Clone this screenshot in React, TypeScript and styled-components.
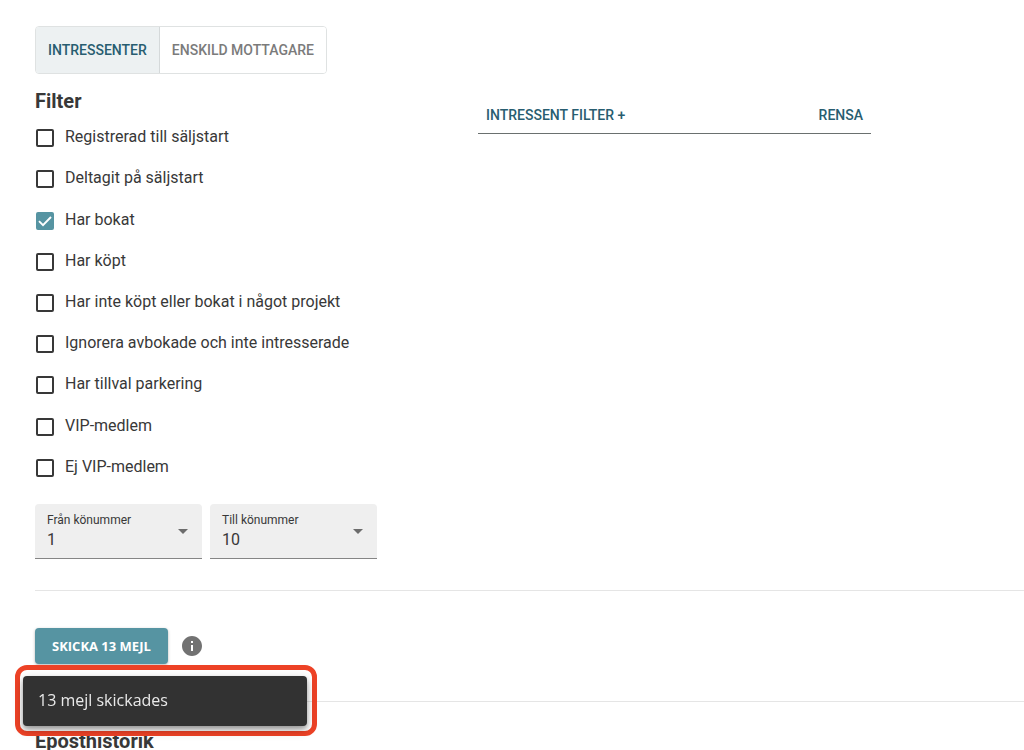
import { useState } from "react";
import styled, { createGlobalStyle } from "styled-components";

const teal = "#5694a2";
const tealDark = "#285d70";
const ink = "#383838";

const GlobalStyle = createGlobalStyle`
  *, *::before, *::after { box-sizing: border-box; }
  body {
    margin: 0;
    background: #fff;
    color: ${ink};
    font-family: Roboto, "Liberation Sans", sans-serif;
    font-size: 16px;
  }
`;

const Page = styled.main`
  padding: 26px 0 24px 35px;
`;

const Columns = styled.div`
  display: grid;
  grid-template-columns: 443px minmax(0, 393px);
  align-items: start;
`;

const ToggleGroup = styled.div`
  display: inline-flex;
  height: 48px;
  border: 1px solid #dfe2e2;
  border-radius: 4px;
  overflow: hidden;
`;

const ToggleButton = styled.button<{ $selected?: boolean }>`
  padding: 0 12px;
  border: 0;
  background: ${(p) => (p.$selected ? "#edf1f2" : "#fff")};
  color: ${(p) => (p.$selected ? tealDark : "#7b7b7b")};
  font: 500 14px/24px Roboto, "Liberation Sans", sans-serif;
  text-transform: uppercase;
  white-space: nowrap;
  cursor: pointer;

  & + & {
    border-left: 1px solid #d5d9da;
  }
`;

const Heading = styled.h2`
  margin: 0;
  font-size: 20px;
  font-weight: 700;
  line-height: 24px;
`;

const FilterHeading = styled(Heading)`
  margin-top: 15px;
`;

const OptionList = styled.div`
  display: grid;
  grid-auto-rows: 1fr;
  min-height: 371px;
  margin-top: 4px;
`;

const Option = styled.label`
  display: flex;
  align-items: center;
  gap: 11px;
  padding-left: 1px;
  line-height: 20px;
  cursor: pointer;
`;

const OptionText = styled.span`
  padding-bottom: 1px;
`;

const CheckSlot = styled.span`
  display: grid;
  flex: none;
  padding-top: 1px;

  & > * {
    grid-area: 1 / 1;
  }
`;

const CheckInput = styled.input`
  appearance: none;
  width: 18px;
  height: 18px;
  margin: 0;
  border: 2px solid ${ink};
  border-radius: 2px;
  background: #fff;
  cursor: pointer;

  &:checked {
    border-color: ${teal};
    background: ${teal};
  }
`;

const CheckMark = styled.svg`
  width: 18px;
  height: 18px;
  pointer-events: none;
`;

const SelectRow = styled.div`
  display: flex;
  gap: 8px;
  margin-top: 16px;
`;

const Field = styled.div`
  position: relative;
  width: 167px;
`;

const FieldLabel = styled.label`
  position: absolute;
  top: 8px;
  left: 12px;
  font-size: 12px;
  line-height: 16px;
  pointer-events: none;
`;

const Select = styled.select`
  appearance: none;
  display: block;
  width: 100%;
  height: 55px;
  padding: 24px 32px 6px 12px;
  border: 0;
  border-bottom: 1px solid #858585;
  border-radius: 4px 4px 0 0;
  background: #efefef;
  color: ${ink};
  font: 400 16px/24px Roboto, "Liberation Sans", sans-serif;
`;

const Arrow = styled.svg`
  position: absolute;
  top: 25px;
  right: 14px;
  width: 10px;
  height: 5px;
  fill: #6c6c6c;
  pointer-events: none;
`;

const FilterBar = styled.div`
  display: flex;
  justify-content: space-between;
  margin-top: 70px;
  padding: 0 8px;
  border-bottom: 1px solid #6a706f;
`;

const TextButton = styled.button`
  height: 37px;
  padding: 0;
  border: 0;
  background: none;
  color: ${tealDark};
  font: 500 14px/24px Roboto, "Liberation Sans", sans-serif;
  text-transform: uppercase;
  cursor: pointer;
`;

const SendArea = styled.section`
  margin-top: 31px;
`;

const Divider = styled.hr`
  height: 1px;
  margin: 0;
  border: 0;
  background: #e5e5e5;
`;

const SendRow = styled.div`
  display: flex;
  align-items: center;
  gap: 12px;
  padding: 37px 0;
`;

const SendButton = styled.button`
  height: 36px;
  padding: 0 17px;
  border: 0;
  border-radius: 4px;
  background: ${teal};
  color: #fff;
  font: 700 13px/24px "Open Sans", "Noto Sans", sans-serif;
  text-transform: uppercase;
  box-shadow: 0 1px 3px rgba(0, 0, 0, 0.3);
  cursor: pointer;
`;

const InfoButton = styled.button`
  display: grid;
  padding: 0;
  border: 0;
  background: none;
  cursor: pointer;
`;

const HistoryHeading = styled(Heading)`
  margin-top: 27px;
`;

const SnackbarFrame = styled.div`
  position: fixed;
  left: 15px;
  bottom: 14px;
  padding: 6px 5px 5px 3px;
  border: 5px solid #ed4226;
  border-radius: 12px;
`;

const Snackbar = styled.div`
  min-width: 284px;
  padding: 12px 15px 14px;
  border-radius: 4px;
  background: #323232;
  color: #e9e9e9;
  font: 400 16px/24px "Open Sans", "Noto Sans", sans-serif;
  box-shadow: 0 3px 5px rgba(0, 0, 0, 0.3), 0 4px 12px rgba(0, 0, 0, 0.2);
`;

const options = [
  "Registrerad till säljstart",
  "Deltagit på säljstart",
  "Har bokat",
  "Har köpt",
  "Har inte köpt eller bokat i något projekt",
  "Ignorera avbokade och inte intresserade",
  "Har tillval parkering",
  "VIP-medlem",
  "Ej VIP-medlem",
];

const numbers = ["1", "2", "3", "4", "5", "6", "7", "8", "9", "10"];

function QueueSelect({ id, label, initial }: { id: string; label: string; initial: string }) {
  return (
    <Field>
      <FieldLabel htmlFor={id}>{label}</FieldLabel>
      <Select id={id} defaultValue={initial}>
        {numbers.map((n) => (
          <option key={n}>{n}</option>
        ))}
      </Select>
      <Arrow viewBox="0 0 10 5" aria-hidden="true">
        <path d="M0 0h10L5 5z" />
      </Arrow>
    </Field>
  );
}

function SendSection() {
  return (
    <SendArea>
      <Divider />
      <SendRow>
        <SendButton type="button">Skicka 13 mejl</SendButton>
        <InfoButton type="button" aria-label="Information">
          <svg width="24" height="24" viewBox="0 0 24 24" fill="#727272" aria-hidden="true">
            <path d="M12 2C6.48 2 2 6.48 2 12s4.480 10 10 10 10-4.480 10-10S17.520 2 12 2zm1 15h-2v-6h2v6zm0-8h-2V7h2v2z" />
          </svg>
        </InfoButton>
      </SendRow>
      <Divider />
      <HistoryHeading>Eposthistorik</HistoryHeading>
    </SendArea>
  );
}

export default function App() {
  const [checked, setChecked] = useState<string[]>(["Har bokat"]);
  const toggle = (name: string) =>
    setChecked((list) => (list.includes(name) ? list.filter((n) => n !== name) : [...list, name]));

  return (
    <>
      <GlobalStyle />
      <Page>
        <Columns>
          <section>
            <ToggleGroup role="group" aria-label="Mottagare">
              <ToggleButton type="button" $selected aria-pressed="true">
                Intressenter
              </ToggleButton>
              <ToggleButton type="button" aria-pressed="false">
                Enskild mottagare
              </ToggleButton>
            </ToggleGroup>
            <FilterHeading>Filter</FilterHeading>
            <OptionList>
              {options.map((name) => (
                <Option key={name}>
                  <CheckSlot>
                    <CheckInput
                      type="checkbox"
                      checked={checked.includes(name)}
                      onChange={() => toggle(name)}
                    />
                    {checked.includes(name) && (
                      <CheckMark viewBox="0 0 18 18" aria-hidden="true">
                        <path d="M3 9.2l4 4 8-8.2" fill="none" stroke="#fff" strokeWidth="1.9" />
                      </CheckMark>
                    )}
                  </CheckSlot>
                  <OptionText>{name}</OptionText>
                </Option>
              ))}
            </OptionList>
            <SelectRow>
              <QueueSelect id="queue-from" label="Från könummer" initial="1" />
              <QueueSelect id="queue-to" label="Till könummer" initial="10" />
            </SelectRow>
          </section>
          <FilterBar>
            <TextButton type="button">Intressent filter +</TextButton>
            <TextButton type="button">Rensa</TextButton>
          </FilterBar>
        </Columns>
        <SendSection />
      </Page>
      <SnackbarFrame>
        <Snackbar role="status">13 mejl skickades</Snackbar>
      </SnackbarFrame>
    </>
  );
}
